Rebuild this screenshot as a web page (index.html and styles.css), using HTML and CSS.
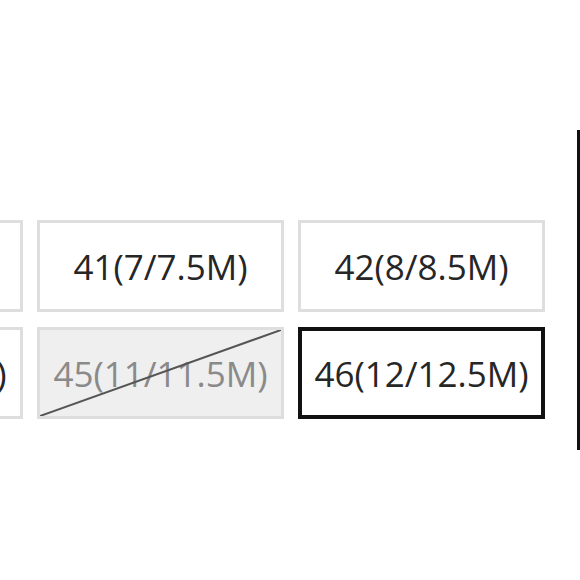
FILE: index.html
```html
<!DOCTYPE html>
<html>
<head>
<meta charset="utf-8">
<link rel="stylesheet" href="styles.css">
</head>
<body>
<div class="page">
  <div class="sizes">
    <div class="grid">
      <div class="size">40(6/6.5M)</div>
      <div class="size">41(7/7.5M)</div>
      <div class="size">42(8/8.5M)</div>
      <div class="size">44(10/10.5M)</div>
      <div class="size disabled">45(11/11.5M)<svg class="strike" viewBox="0 0 100 100" preserveAspectRatio="none"><line x1="0" y1="100" x2="100" y2="0"/></svg></div>
      <div class="size selected">46(12/12.5M)</div>
    </div>
  </div>
  <div class="divider"></div>
</div>
</body>
</html>
```
FILE: styles.css
```css
html, body {
  margin: 0;
  padding: 0;
  background: #fff;
}
.page {
  display: flex;
  width: 580px;
  height: 580px;
  overflow: hidden;
}
.sizes {
  flex: 1;
  padding-top: 220px;
  overflow: hidden;
}
.grid {
  display: grid;
  grid-template-columns: repeat(3, 247px);
  grid-auto-rows: 92px;
  column-gap: 14px;
  row-gap: 15px;
  margin-left: -224px;
}
.size {
  position: relative;
  box-sizing: border-box;
  border: 3px solid #dedede;
  display: flex;
  align-items: center;
  justify-content: center;
  font-family: "Open Sans", sans-serif;
  font-size: 35px;
  color: #262626;
  white-space: nowrap;
  background: #fff;
}
.size.disabled {
  background: #efefef;
  color: #8a8a8a;
}
.size.selected {
  border: 4px solid #111;
}
.strike {
  position: absolute;
  inset: 0;
  width: 100%;
  height: 100%;
}
.strike line {
  stroke: #555;
  stroke-width: 2;
  vector-effect: non-scaling-stroke;
}
.divider {
  width: 3px;
  margin-top: 130px;
  height: 320px;
  background: #111;
}
```
